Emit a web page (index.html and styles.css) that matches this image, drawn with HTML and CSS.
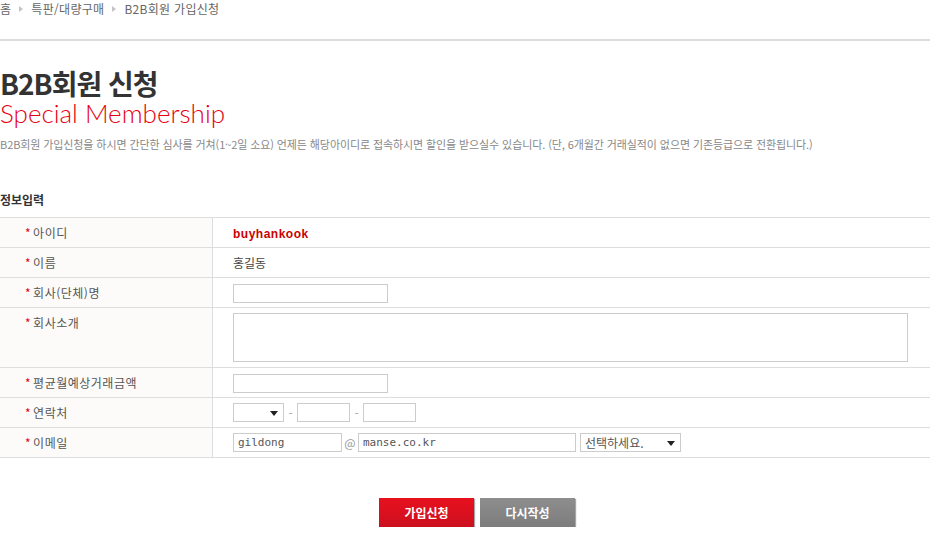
FILE: index.html
```html
<!DOCTYPE html>
<html lang="ko">
<head>
    <meta charset="UTF-8">
    <title>B2B회원 신청</title>
    <link rel="stylesheet" href="styles.css">
</head>
<body>
    <div class="location">
        <span>홈</span>
        <span class="arrow"></span>
        <span>특판/대량구매</span>
        <span class="arrow"></span>
        <span>B2B회원 가입신청</span>
    </div>

    <div class="page">
        <div class="title-box">
            <h1 class="title">B2B회원 신청</h1>
            <p class="title-en">Special Membership</p>
        </div>
        <p class="desc">B2B회원 가입신청을 하시면 간단한 심사를 거쳐(1~2일 소요) 언제든 해당아이디로 접속하시면 할인을 받으실수 있습니다. (단, 6개월간 거래실적이 없으면 기존등급으로 전환됩니다.)</p>

        <h2 class="sub-title">정보입력</h2>

        <table class="form-table">
            <tr>
                <th><span class="req">*</span>아이디</th>
                <td><strong class="user-id">buyhankook</strong></td>
            </tr>
            <tr>
                <th><span class="req">*</span>이름</th>
                <td><span class="user-name">홍길동</span></td>
            </tr>
            <tr>
                <th><span class="req">*</span>회사(단체)명</th>
                <td><input type="text" class="inp w155"></td>
            </tr>
            <tr class="tall">
                <th><span class="req">*</span>회사소개</th>
                <td><textarea class="inp area"></textarea></td>
            </tr>
            <tr>
                <th><span class="req">*</span>평균월예상거래금액</th>
                <td><input type="text" class="inp w155"></td>
            </tr>
            <tr>
                <th><span class="req">*</span>연락처</th>
                <td>
                    <div class="field-row">
                        <span class="sel w51"><span class="caret"></span></span>
                        <span class="dash">-</span>
                        <input type="text" class="inp w53">
                        <span class="dash">-</span>
                        <input type="text" class="inp w53">
                    </div>
                </td>
            </tr>
            <tr>
                <th><span class="req">*</span>이메일</th>
                <td>
                    <div class="field-row">
                        <input type="text" class="inp w109" value="gildong">
                        <span class="at">@</span>
                        <input type="text" class="inp w218" value="manse.co.kr">
                        <span class="sel w101">선택하세요.<span class="caret"></span></span>
                    </div>
                </td>
            </tr>
        </table>

        <div class="btn-area">
            <button class="btn btn-red">가입신청</button>
            <button class="btn btn-gray">다시작성</button>
        </div>
    </div>
</body>
</html>
```

FILE: styles.css
```css
/* base */
body {
    margin: 0;
    font-family: "Noto Sans CJK KR", "Noto Sans", sans-serif;
    font-size: 12px;
    color: #555;
    background: #fff;
}

/* breadcrumb */
.location {
    display: flex;
    align-items: flex-start;
    gap: 8px;
    height: 41px;
    padding-top: 1px;
    box-sizing: border-box;
    line-height: 16px;
    color: #666;
    letter-spacing: 0.3px;
    border-bottom: 2px solid #ddd;
}

.location .arrow {
    width: 0;
    height: 0;
    margin-top: 5px;
    border-left: 4px solid #c4c4c4;
    border-top: 3px solid transparent;
    border-bottom: 3px solid transparent;
}

/* title */
.title-box {
    padding-top: 26px;
}

.title {
    margin: 0;
    font-size: 28px;
    line-height: 32px;
    font-weight: 700;
    color: #333;
    letter-spacing: -1px;
}

.title-en {
    margin: 0;
    font-family: Lato, "Noto Sans", sans-serif;
    font-weight: 300;
    font-size: 26px;
    line-height: 28px;
    color: #e60012;
}

.desc {
    margin: 9px 0 0;
    font-size: 11px;
    line-height: 16px;
    color: #888;
    letter-spacing: -0.1px;
}

.sub-title {
    margin: 40px 0 0;
    font-size: 12px;
    line-height: 16px;
    font-weight: 700;
    color: #333;
}

/* form table */
.form-table {
    width: 100%;
    margin-top: 9px;
    border-collapse: collapse;
    border-top: 1px solid #ddd;
}

.form-table th,
.form-table td {
    height: 29px;
    border-bottom: 1px solid #ddd;
    padding: 0;
    font-weight: 400;
    text-align: left;
}

.form-table th {
    width: 187px;
    padding-left: 25px;
    background: #fcfbf9;
    border-right: 1px solid #ddd;
    color: #555;
    letter-spacing: 0.5px;
}

.form-table td {
    padding-left: 20px;
}

.form-table tr.tall th,
.form-table tr.tall td {
    height: 59px;
}

.form-table tr.tall th {
    vertical-align: top;
    padding-top: 6px;
    box-sizing: border-box;
}

.req {
    color: #e60012;
    margin-right: 2px;
}

.user-id {
    font-family: "Liberation Sans", Arial, sans-serif;
    color: #cc0000;
    font-size: 12px;
    letter-spacing: 0.5px;
}

.user-name {
    color: #444;
}

/* inputs */
.inp {
    box-sizing: border-box;
    height: 19px;
    margin: 0;
    padding: 0 4px;
    border: 1px solid #ccc;
    font-family: "DejaVu Sans Mono", monospace;
    font-size: 11px;
    color: #555;
    vertical-align: middle;
}

.area {
    display: block;
    width: 675px;
    height: 49px;
    resize: none;
}

.w53 { width: 53px; }
.w109 { width: 109px; }
.w155 { width: 155px; }
.w218 { width: 218px; }

.field-row {
    display: flex;
    align-items: center;
}

.sel {
    position: relative;
    box-sizing: border-box;
    height: 19px;
    border: 1px solid #ccc;
    padding-left: 4px;
    line-height: 17px;
    font-size: 12px;
    color: #555;
}

.w51 { width: 51px; }
.w101 { width: 101px; margin-left: 4px; }

.caret {
    position: absolute;
    right: 5px;
    top: 7px;
    border-top: 5px solid #222;
    border-left: 4px solid transparent;
    border-right: 4px solid transparent;
}

.dash {
    width: 13px;
    text-align: center;
    color: #aaa;
}

.at {
    width: 16px;
    text-align: center;
    color: #999;
}

/* buttons */
.btn-area {
    display: flex;
    justify-content: center;
    gap: 6px;
    margin-top: 40px;
    padding-left: 24px;
}

.btn {
    width: 95px;
    height: 29px;
    border: 0;
    font-family: "Noto Sans CJK KR", sans-serif;
    font-size: 12px;
    font-weight: 700;
    color: #fff;
    box-shadow: 1px 1px 1px rgba(0, 0, 0, 0.35);
}

.btn-red {
    background: linear-gradient(#e8101e, #cc1020);
}

.btn-gray {
    background: linear-gradient(#8e8e8e, #7c7c7c);
}
```
